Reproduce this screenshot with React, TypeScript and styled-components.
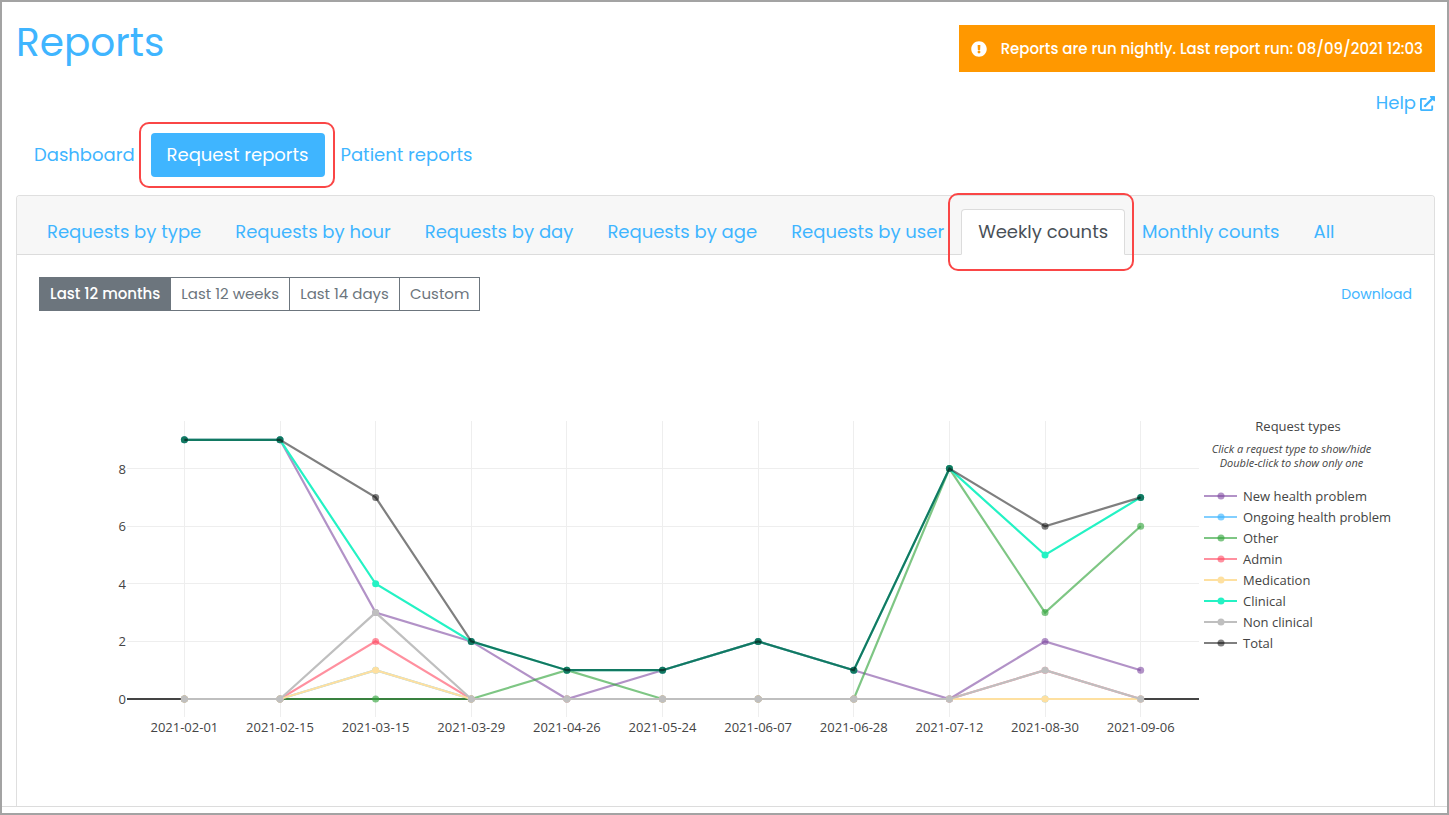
import React, { useEffect, useRef, useState } from "react";
import styled, { createGlobalStyle, css } from "styled-components";
import { FaExclamationCircle, FaExternalLinkAlt } from "react-icons/fa";

const blue = "#3fb5ff";
const uiFont = `Poppins, Inter, "Open Sans", sans-serif`;
const chartFont = `"Open Sans", "Noto Sans", sans-serif`;

const GlobalStyle = createGlobalStyle`
  *, *::before, *::after { box-sizing: border-box; }
  body { margin: 0; background: #fff; color: #444; font-family: ${uiFont}; font-size: 18px; line-height: 28px; }
  button { font: inherit; cursor: pointer; }
  a { color: ${blue}; text-decoration: none; }
`;

const Page = styled.div`
  display: flex;
  flex-direction: column;
  min-height: 100vh;
  border: 2px solid #a3a3a3;
`;

const Main = styled.main`
  flex: 1;
  display: flex;
  flex-direction: column;
  padding: 16px 12px 0 14px;
  border-bottom: 1px solid #dcdcdc;
`;

const Footer = styled.div`
  height: 6px;
`;

const Header = styled.header`
  display: flex;
  justify-content: space-between;
  align-items: flex-start;
`;

const Title = styled.h1`
  margin: 0;
  color: ${blue};
  font-size: 39px;
  line-height: 50px;
  font-weight: 400;
`;

const HeaderSide = styled.div`
  display: flex;
  flex-direction: column;
  align-items: flex-end;
  gap: 18px;
  padding-top: 7px;
`;

const Notice = styled.div`
  display: flex;
  align-items: center;
  gap: 14px;
  padding: 12px;
  background: #ff9800;
  color: #fff;
  font-size: 15px;
  line-height: 23px;
  font-weight: 500;
`;

const HelpLink = styled.a`
  display: flex;
  align-items: center;
  gap: 4px;
  line-height: 26px;
`;

const Highlight = styled.span<{ $kind: "pill" | "tab" }>`
  position: relative;
  display: flex;
  &::after {
    content: "";
    position: absolute;
    inset: ${(p) => (p.$kind === "tab" ? "-16px -9px -17px -13px" : "-11px -10px -11px -12px")};
    border: 2px solid #fa4646;
    border-radius: 10px;
    pointer-events: none;
  }
`;

const Pills = styled.nav`
  display: flex;
  align-items: center;
  margin-top: 17px;
  padding-left: 2px;
`;

const Pill = styled.button<{ $active?: boolean }>`
  height: 44px;
  padding: 0 16px;
  border: 0;
  border-radius: 4px;
  background: ${(p) => (p.$active ? blue : "transparent")};
  color: ${(p) => (p.$active ? "#fff" : blue)};
`;

const Card = styled.section`
  flex: 1;
  margin-top: 18px;
  border: 1px solid #dfdfdf;
  border-bottom: 0;
  border-radius: 4px 4px 0 0;
`;

const Tabs = styled.nav`
  display: flex;
  padding: 13px 13px 0;
  background: #f7f7f7;
  border-bottom: 1px solid #dcdcdc;
  border-radius: 3px 3px 0 0;
`;

const Tab = styled.button<{ $active?: boolean }>`
  height: 46px;
  margin-bottom: -1px;
  padding: 0 16px;
  border: 1px solid transparent;
  border-radius: 4px 4px 0 0;
  background: transparent;
  color: ${blue};
  ${(p) =>
    p.$active &&
    css`
      background: #fff;
      border-color: #dcdcdc #dcdcdc #fff;
      color: #495057;
    `}
`;

const Toolbar = styled.div`
  display: flex;
  justify-content: space-between;
  align-items: center;
  padding: 22px;
  font-size: 15px;
`;

const Ranges = styled.div`
  display: flex;
`;

const Range = styled.button<{ $active?: boolean }>`
  height: 34px;
  padding: 0 10px;
  border: 1px solid #6c757d;
  margin-left: -1px;
  &:first-child { margin-left: 0; }
  background: ${(p) => (p.$active ? "#6c757d" : "#fff")};
  color: ${(p) => (p.$active ? "#fff" : "#6c757d")};
  font-weight: ${(p) => (p.$active ? 500 : 400)};
`;

const Download = styled.a`
  font-size: 14px;
`;

const Report = styled.div`
  display: flex;
  padding: 84px 20px 60px 98px;
  font-family: ${chartFont};
  font-size: 13px;
  color: #444;
`;

const Plot = styled.div`
  flex: 1;
  min-width: 0;
  padding-top: 4px;
  svg { display: block; }
`;

const Legend = styled.aside`
  width: 215px;
  padding-left: 5px;
`;

const LegendTitle = styled.h2`
  margin: 0 22px 7px 0;
  font-size: 13px;
  line-height: 18px;
  font-weight: 400;
  text-align: center;
`;

const LegendHint = styled.p`
  margin: 0 35px 15px 0;
  font-size: 11px;
  line-height: 14px;
  font-style: italic;
  text-align: center;
  white-space: nowrap;
`;

const LegendItem = styled.button<{ $off: boolean }>`
  display: flex;
  align-items: center;
  gap: 5px;
  width: 100%;
  height: 21px;
  padding: 0;
  border: 0;
  background: none;
  color: inherit;
  text-align: left;
  opacity: ${(p) => (p.$off ? 0.4 : 1)};
`;

type Series = { name: string; color: string; values: number[] };

const dates = [
  "2021-02-01", "2021-02-15", "2021-03-15", "2021-03-29", "2021-04-26", "2021-05-24",
  "2021-06-07", "2021-06-28", "2021-07-12", "2021-08-30", "2021-09-06",
];

const series: Series[] = [
  { name: "New health problem", color: "rgba(122,68,158,0.58)", values: [9, 9, 3, 2, 0, 1, 2, 1, 0, 2, 1] },
  { name: "Ongoing health problem", color: "rgba(63,181,255,0.65)", values: [0, 0, 1, 0, 0, 0, 0, 0, 0, 0, 0] },
  { name: "Other", color: "rgba(50,165,60,0.63)", values: [0, 0, 0, 0, 1, 0, 0, 0, 8, 3, 6] },
  { name: "Admin", color: "rgba(255,70,95,0.6)", values: [0, 0, 2, 0, 0, 0, 0, 0, 0, 1, 0] },
  { name: "Medication", color: "#fee0a0", values: [0, 0, 1, 0, 0, 0, 0, 0, 0, 0, 0] },
  { name: "Clinical", color: "#24f2c4", values: [9, 9, 4, 2, 1, 1, 2, 1, 8, 5, 7] },
  { name: "Non clinical", color: "#bfbfbf", values: [0, 0, 3, 0, 0, 0, 0, 0, 0, 1, 0] },
  { name: "Total", color: "rgba(0,0,0,0.5)", values: [9, 9, 7, 2, 1, 1, 2, 1, 8, 6, 7] },
];

const PLOT_LEFT = 12;
const BASE = 278;
const UNIT = 28.8;

function Chart({ hidden }: { hidden: string[] }) {
  const box = useRef<HTMLDivElement>(null);
  const [width, setWidth] = useState(1084);
  useEffect(() => {
    const el = box.current;
    if (!el) return;
    const observer = new ResizeObserver(() => setWidth(el.clientWidth));
    observer.observe(el);
    return () => observer.disconnect();
  }, []);

  const step = (width - PLOT_LEFT) / 11.21;
  const x = (i: number) => PLOT_LEFT + step * (i + 0.6);
  const y = (v: number) => BASE - v * UNIT;

  return (
    <Plot ref={box}>
      <svg width={width} height={320} role="img" aria-label="Weekly request counts by type">
        <g stroke="#eee" shapeRendering="crispEdges">
          {dates.map((d, i) => <line key={d} x1={x(i)} x2={x(i)} y1={0} y2={BASE + 18} />)}
          {[2, 4, 6, 8].map((v) => <line key={v} x1={PLOT_LEFT} x2={width} y1={y(v)} y2={y(v)} />)}
        </g>
        <line x1={PLOT_LEFT} x2={width} y1={BASE} y2={BASE} stroke="#444" strokeWidth={2} />
        {series.filter((s) => !hidden.includes(s.name)).map((s) => (
          <g key={s.name}>
            <polyline
              points={s.values.map((v, i) => `${x(i)},${y(v)}`).join(" ")}
              fill="none" stroke={s.color} strokeWidth={2.2}
            />
            {s.values.map((v, i) => <circle key={i} cx={x(i)} cy={y(v)} r={3.5} fill={s.color} />)}
          </g>
        ))}
        <g fill="#444" fontSize={13}>
          {[0, 2, 4, 6, 8].map((v) => (
            <text key={v} x={PLOT_LEFT - 1} y={y(v) + 5} textAnchor="end">{v}</text>
          ))}
          {dates.map((d, i) => (
            <text key={d} x={x(i)} y={BASE + 33} textAnchor="middle">{d}</text>
          ))}
        </g>
      </svg>
    </Plot>
  );
}

const tabs = [
  "Requests by type", "Requests by hour", "Requests by day", "Requests by age",
  "Requests by user", "Weekly counts", "Monthly counts", "All",
];

export default function App() {
  const [hidden, setHidden] = useState<string[]>([]);
  const toggle = (name: string) =>
    setHidden((h) => (h.includes(name) ? h.filter((n) => n !== name) : [...h, name]));
  const isolate = (name: string) => setHidden(series.map((s) => s.name).filter((n) => n !== name));

  return (
    <Page>
      <GlobalStyle />
      <Main>
        <Header>
          <Title>Reports</Title>
          <HeaderSide>
            <Notice role="status">
              <FaExclamationCircle size={16} />
              <span>Reports are run nightly. Last report run: 08/09/2021 12:03</span>
            </Notice>
            <HelpLink href="#help">Help <FaExternalLinkAlt size={15} /></HelpLink>
          </HeaderSide>
        </Header>
        <Pills aria-label="Report groups">
          <Pill>Dashboard</Pill>
          <Highlight $kind="pill"><Pill $active aria-current="page">Request reports</Pill></Highlight>
          <Pill>Patient reports</Pill>
        </Pills>
        <Card>
          <Tabs aria-label="Request reports">
            {tabs.map((t) =>
              t === "Weekly counts" ? (
                <Highlight key={t} $kind="tab"><Tab $active aria-current="page">{t}</Tab></Highlight>
              ) : (
                <Tab key={t}>{t}</Tab>
              )
            )}
          </Tabs>
          <Toolbar>
            <Ranges role="group" aria-label="Date range">
              <Range $active>Last 12 months</Range>
              <Range>Last 12 weeks</Range>
              <Range>Last 14 days</Range>
              <Range>Custom</Range>
            </Ranges>
            <Download href="#download">Download</Download>
          </Toolbar>
          <Report>
            <Chart hidden={hidden} />
            <Legend>
              <LegendTitle>Request types</LegendTitle>
              <LegendHint>Click a request type to show/hide<br />Double-click to show only one</LegendHint>
              {series.map((s) => (
                <LegendItem
                  key={s.name}
                  $off={hidden.includes(s.name)}
                  onClick={() => toggle(s.name)}
                  onDoubleClick={() => isolate(s.name)}
                >
                  <svg width={34} height={8} aria-hidden="true">
                    <line x1={0} x2={33} y1={4} y2={4} stroke={s.color} strokeWidth={2} />
                    <circle cx={17} cy={4} r={3.5} fill={s.color} />
                  </svg>
                  {s.name}
                </LegendItem>
              ))}
            </Legend>
          </Report>
        </Card>
      </Main>
      <Footer />
    </Page>
  );
}
